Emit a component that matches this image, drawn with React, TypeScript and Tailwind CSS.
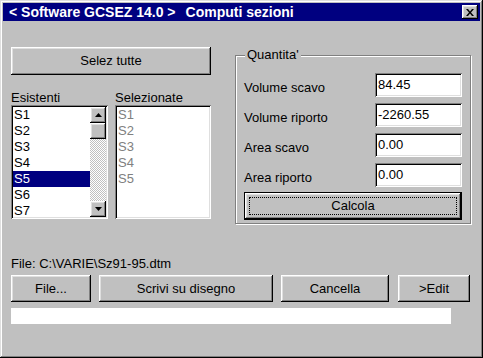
import { ReactNode } from "react";

const raised =
  "shadow-[inset_-1px_-1px_#000,inset_1px_1px_#fff,inset_-2px_-2px_#808080,inset_2px_2px_#dfdfdf]";
const sunken =
  "shadow-[inset_1px_1px_#808080,inset_-1px_-1px_#fff,inset_2px_2px_#000,inset_-2px_-2px_#dfdfdf]";

type BtnProps = { children: ReactNode; className?: string };

const Btn = ({ children, className = "" }: BtnProps) => (
  <div className={`flex items-center justify-center bg-[#c0c0c0] ${raised} ${className}`}>
    {children}
  </div>
);

const existing = ["S1", "S2", "S3", "S4", "S5", "S6", "S7"];
const chosen = ["S1", "S2", "S3", "S4", "S5"];

const Arrow = ({ down }: { down?: boolean }) => (
  <svg width="7" height="4" viewBox="0 0 7 4">
    <path d={down ? "M0 0h7L3.5 4z" : "M0 4h7L3.5 0z"} fill="#000" />
  </svg>
);

const Field = ({ label, value }: { label: string; value: string }) => (
  <div className="flex h-[24px] items-center mb-[6px]">
    <span className="flex-1 mt-[5px]">{label}</span>
    <div className={`w-[87px] h-[24px] bg-white pl-[3px] flex items-center ${sunken}`}>{value}</div>
  </div>
);

export default function App() {
  return (
    <div
      className="w-[483px] h-[358px] bg-[#c0c0c0] flex flex-col text-[13px] text-black shadow-[inset_-1px_-1px_#000,inset_1px_1px_#dfdfdf,inset_-2px_-2px_#808080,inset_2px_2px_#fff]"
      style={{ fontFamily: '"Liberation Sans", Arial, sans-serif' }}
    >
      {/* title bar */}
      <div className="mx-[3px] mt-[3px] h-[18px] bg-[#000080] flex items-center pl-[6px] pr-[2px] text-white font-bold text-[14px]">
        <span>&lt; Software GCSEZ 14.0 &gt;</span>
        <span className="ml-[10px]">Computi sezioni</span>
        <Btn className="ml-auto w-[16px] h-[14px]">
          <svg width="8" height="7" viewBox="0 0 8 7">
            <path d="M0 0h2l2 2.5L6 0h2L5 3.5 8 7H6L4 4.5 2 7H0l3-3.5z" fill="#000" />
          </svg>
        </Btn>
      </div>

      <div className="pl-[11px] pr-[12px] flex">
        {/* left column */}
        <div className="w-[200px] mt-[26px]">
          <Btn className="h-[28px] w-[200px]">Selez tutte</Btn>
          <div className="flex mt-[15px]">
            <div className="w-[97px]">
              <div className="h-[15px] leading-[15px]">Esistenti</div>
              <div className={`h-[114px] bg-white p-[2px] flex ${sunken}`}>
                <div className="flex-1 overflow-hidden">
                  {existing.map((s) => (
                    <div
                      key={s}
                      className={`h-[16px] leading-[16px] pl-[1px] ${s === "S5" ? "bg-[#000080] text-white" : ""}`}
                    >
                      {s}
                    </div>
                  ))}
                </div>
                <div className="w-[16px] flex flex-col">
                  <Btn className="h-[16px]">
                    <Arrow />
                  </Btn>
                  <Btn className="h-[16px]">{null}</Btn>
                  <div className="flex-1 bg-[repeating-conic-gradient(#c0c0c0_0_25%,#fff_0_50%)] bg-[length:2px_2px]" />
                  <Btn className="h-[16px]">
                    <Arrow down />
                  </Btn>
                </div>
              </div>
            </div>
            <div className="w-[96px] ml-[7px]">
              <div className="h-[15px] leading-[15px]">Selezionate</div>
              <div className={`h-[114px] bg-white p-[2px] text-[#808080] ${sunken}`}>
                {chosen.map((s) => (
                  <div key={s} className="h-[16px] leading-[16px] pl-[1px]">
                    {s}
                  </div>
                ))}
              </div>
            </div>
          </div>
        </div>

        {/* quantities group */}
        <div className="relative ml-[24px] mt-[34px] w-[236px] h-[169px] border border-[#808080] shadow-[inset_1px_1px_#fff,1px_1px_#fff] pl-[8px] pr-[8px] pt-[17px]">
          <span className="absolute -top-[9px] left-[9px] bg-[#c0c0c0] px-[2px] leading-[16px]">Quantita'</span>
          <Field label="Volume scavo" value="84.45" />
          <Field label="Volume riporto" value="-2260.55" />
          <Field label="Area scavo" value="0.00" />
          <Field label="Area riporto" value="0.00" />
          <div className="-mt-[1px] h-[28px] border border-black">
            <div className={`h-full p-[4px] ${raised}`}>
              <div className="h-full border border-dotted border-black flex items-center justify-center">
                Calcola
              </div>
            </div>
          </div>
        </div>
      </div>

      {/* bottom */}
      <div className="pl-[11px] mt-[32px] h-[16px] leading-[16px]">File: C:\VARIE\Sz91-95.dtm</div>
      <div className="pl-[11px] mt-[3px] flex">
        <Btn className="w-[80px] h-[27px]">File...</Btn>
        <Btn className="w-[174px] h-[27px] ml-[8px]">Scrivi su disegno</Btn>
        <Btn className="w-[108px] h-[27px] ml-[8px]">Cancella</Btn>
        <Btn className="w-[72px] h-[27px] ml-[9px]">&gt;Edit</Btn>
      </div>
      <div className="ml-[11px] mt-[6px] w-[440px] h-[16px] bg-white" />
    </div>
  );
}
